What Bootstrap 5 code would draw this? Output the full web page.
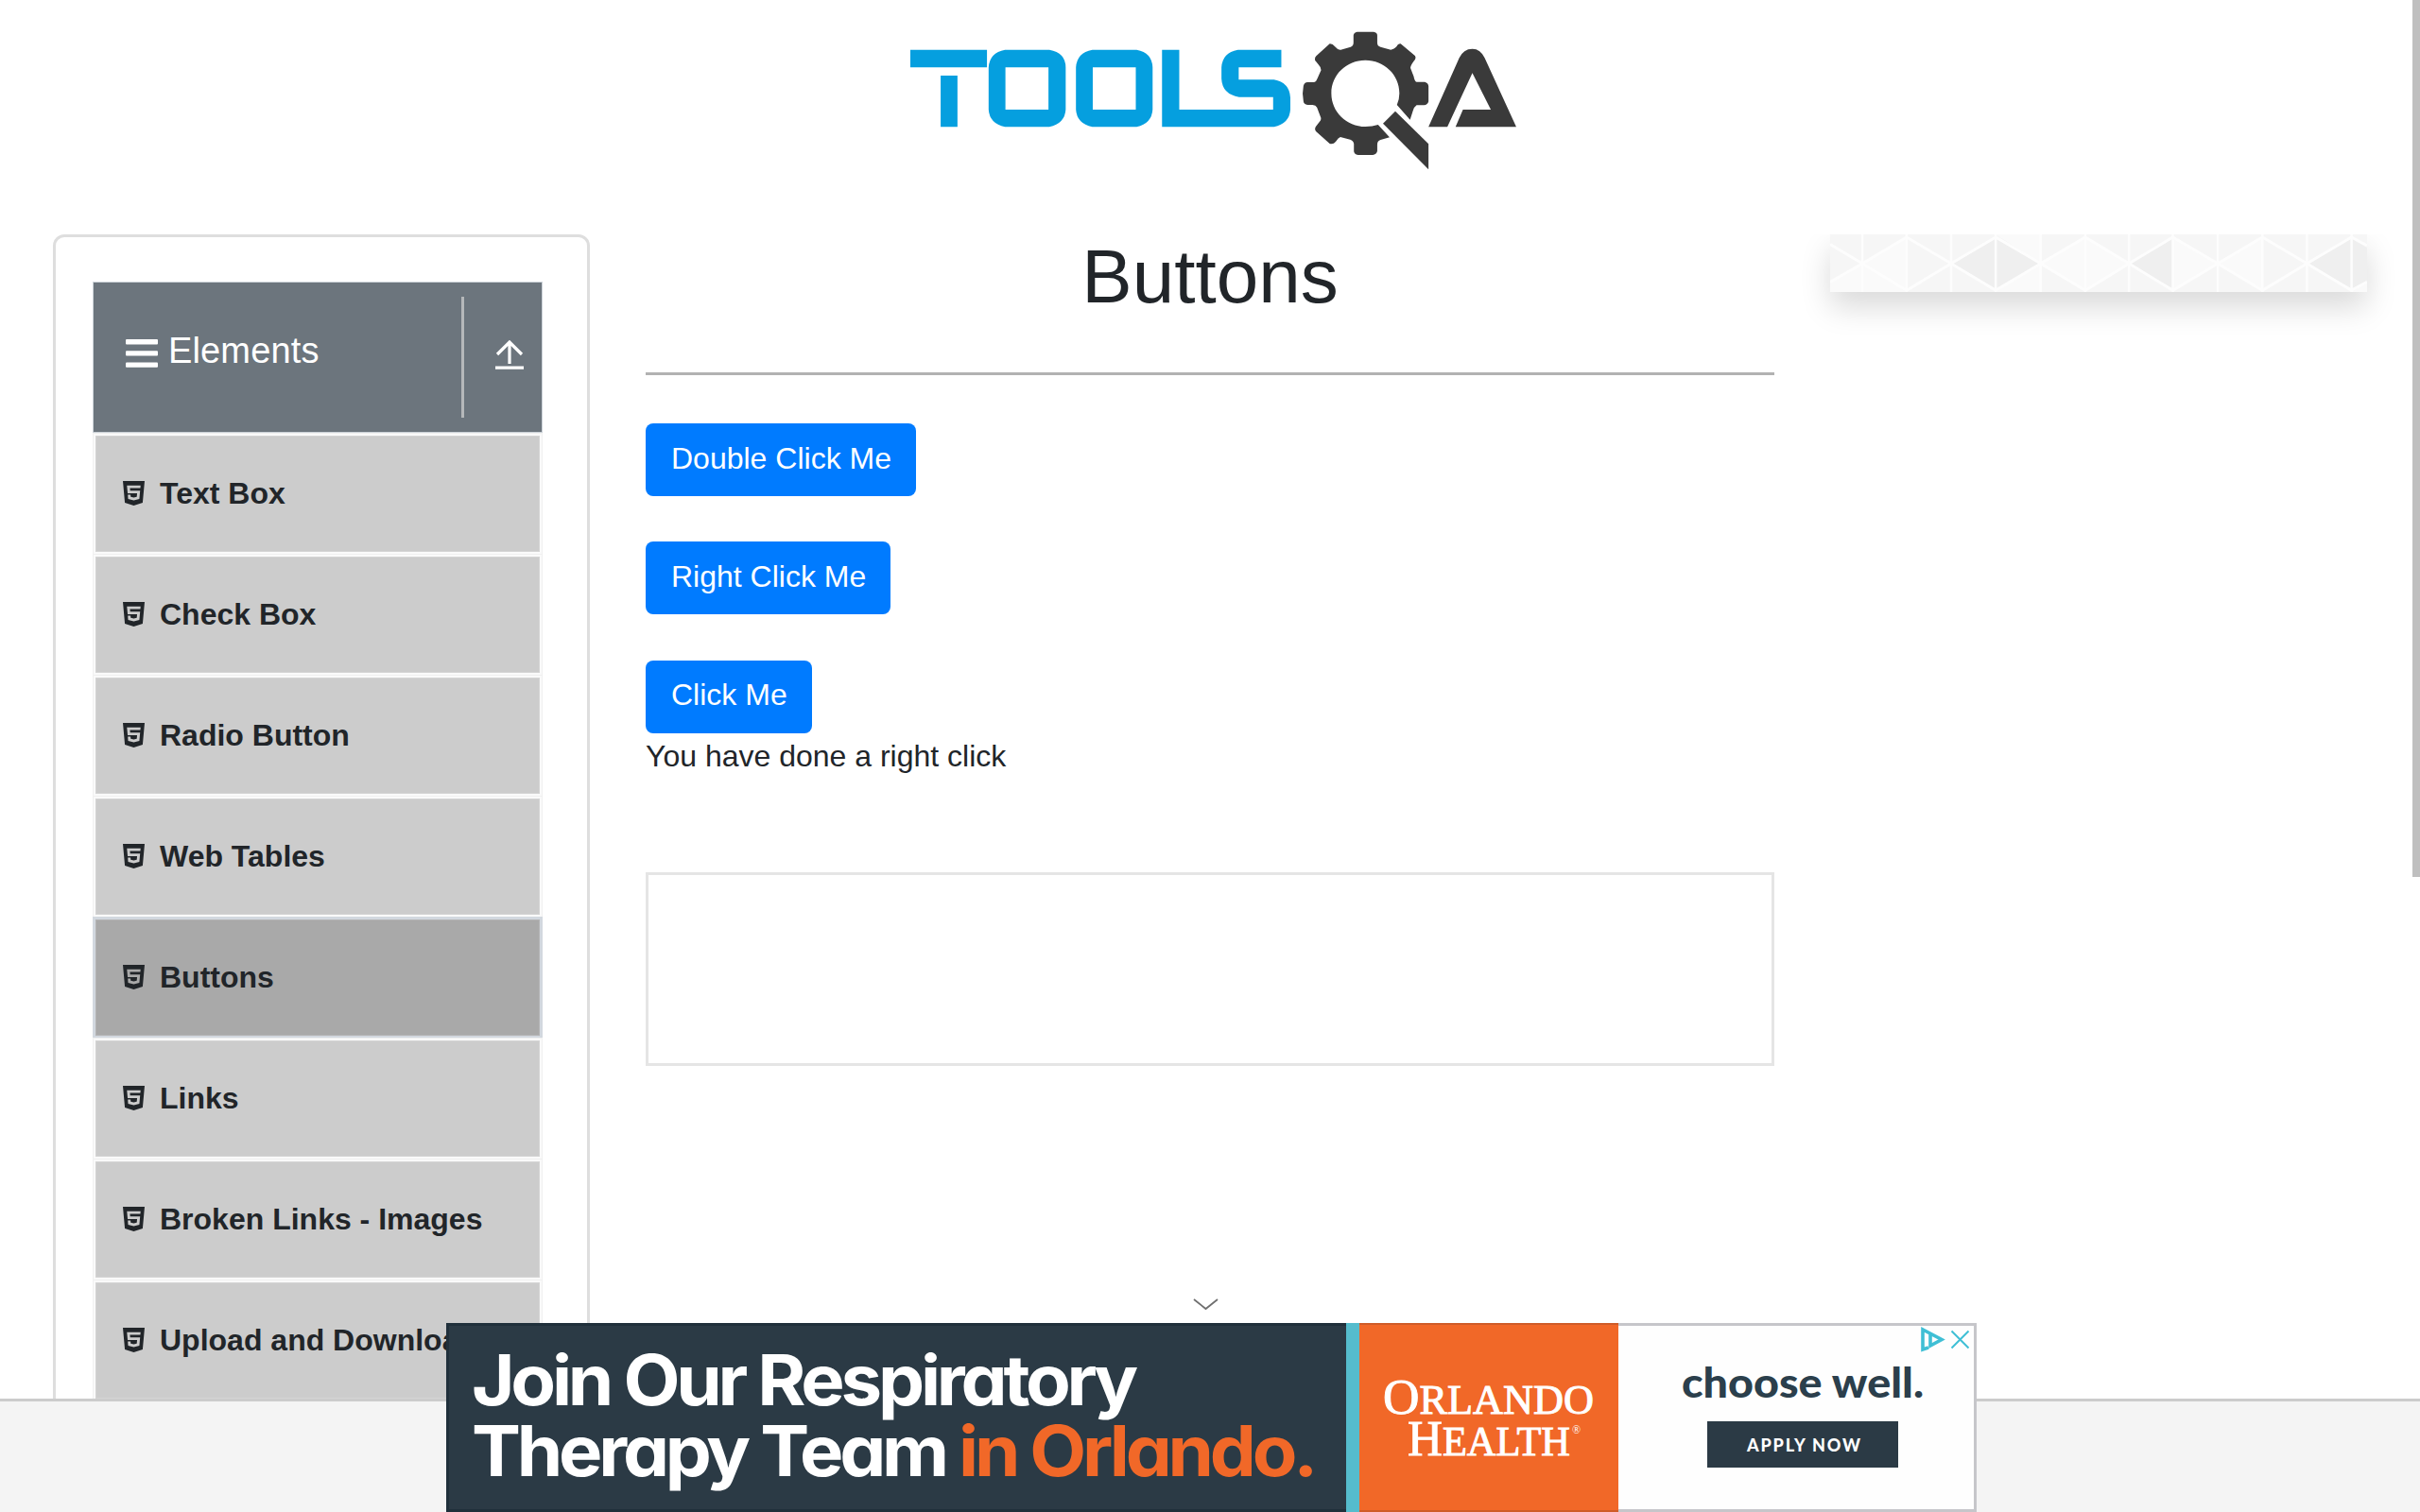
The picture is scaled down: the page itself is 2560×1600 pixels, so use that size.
<!DOCTYPE html>
<html lang="en">
<head>
<meta charset="utf-8">
<title>ToolsQA - Buttons</title>
<link rel="stylesheet" href="https://cdn.jsdelivr.net/npm/bootstrap@5.3.0/dist/css/bootstrap.min.css">
<style>
body{font:400 32px/48px "Liberation Sans",Arial,sans-serif;color:#212529;background:#fff;height:1600px;overflow:hidden}
.site-head{height:248px;padding:10px 0 0 940px}
.site-head svg{display:block;width:680px;height:190px}
.page-main{height:1232px;overflow:hidden;padding-left:56px}
.side-panel{width:568px;height:1400px;border:3px solid #dedede;border-radius:12px;padding:47px 47px 0 39px}
.group-head{height:160px;background:#6c757d;color:#fff;outline:1px solid #ccd2d8;outline-offset:-1px;padding-left:35px;font-size:38px}
.group-lead{height:150px}
.group-head .burger{width:34px;height:30px;margin-top:1px}
.group-title{margin-left:11px;padding-bottom:4px;letter-spacing:.15px}
.head-split{width:3px;height:128px;background:#b5b8ba;margin:16px 33px 0 auto}
.group-head .up{width:30px;height:31px;margin:62px 20px 0 0}
.side-item{height:128px;border:1px solid #f0f0f0;border-bottom:0;padding:2px;font-weight:700;background:#fafafa;border-radius:0}
.side-item>span{display:flex;align-items:center;height:123px;background:#ccc;border:1px solid #d4d4d4;padding:0 0 2px 28px;white-space:nowrap;overflow:hidden}
.side-item svg{width:23px;height:26px;margin-right:16px;flex:none}
.side-item.current{background:#d2d8df;border-color:#d2d8df}
.side-item.current>span{background:#a9a9a9;border-color:#b4b4b4}
.center-col{width:1194px;margin-left:59px}
.center-col h1{font-size:80px;line-height:90px;margin:0;text-align:center}
.rule{height:3px;background:#b2b2b2;margin-top:56px;margin-bottom:51px}
.btn-demo{display:block;height:77px;padding:0 26px 4px 27px;border:0;border-radius:8px;background:#007bff;color:#fff;font-size:32px;line-height:70px;margin-bottom:48.4px}
.btn-demo:hover{background:#0069d9;color:#fff}
.ad-frame{height:205px;border:3px solid #e5e5e5;margin-top:99px}
.side-promo{width:568px;height:61px;margin-left:59px;box-shadow:0 16px 32px rgba(0,0,0,.15)}
.side-promo svg{display:block;width:568px;height:61px}
.site-foot{height:120px;background:#f4f4f4;border-top:3px solid #ccc}
.sticky-ad{left:472px;top:1400px;width:1619px;height:200px}
.sticky-ad svg{display:block}
.ad-headline{font-family:Inter,Lato,sans-serif;font-weight:700;font-size:74px;letter-spacing:-4px;font-feature-settings:"cv11" 1,"ss03" 1;fill:#fff}
.ad-chevron{left:1262px;top:1373px;width:27px;height:14px}
.scroll-thumb{right:0;top:0;width:8px;height:928px;background:#bfbfbf}
</style>
</head>
<body class="position-relative">
<svg width="0" height="0" class="position-absolute">
  <symbol id="h5" viewBox="0 32 384 448" preserveAspectRatio="none"><path fill="#212529" d="M0 32l34.9 395.8L191.5 480l157.6-52.2L384 32H0zm308.2 127.900H124.4l4.100 49.400h175.600l-13.600 148.400-97.900 27v.3h-1.100l-98.700-27.300-6-75.800h47.700L138 320l53.500 14.500 53.700-14.500 6-62.200H84.300L71.500 112.200h241.100l-4.400 47.700z"/></symbol>
</svg>

<header class="site-head">
  <svg viewBox="0 0 1568 570" preserveAspectRatio="none" aria-label="TOOLSQA">
    <g fill="#059fdf">
      <path d="M53 128H240V184H53zM127 210H168V373H127z"/>
      <path fill-rule="evenodd" d="M284 128H392Q432 137 432 184V318Q430 362 392 373H284Q246 362 244 318V184Q246 137 284 128zM285 184V318H390V184z"/>
      <path fill-rule="evenodd" d="M497 128H605Q643 137 644 184V318Q642 362 605 373H497Q459 362 457 318V184Q459 137 497 128zM498 184V318H603V184z"/>
      <path d="M667 128H709V318H938V278H855Q814 270 812 220V184Q814 137 852 128H958V184H854V223H940Q978 232 980 280V318Q978 362 940 373H667z"/>
    </g>
    <g fill="#3a3a3a">
      <path fill-rule="evenodd" d="M1143 71H1183Q1192 73 1192 82V105Q1192 117 1200 119L1225 128Q1231 128 1239 118Q1243 107 1249 109L1284 147Q1288 155 1281 164Q1272 180 1273 186L1281 213Q1283 229 1288 230H1308Q1316 233 1317 243V292Q1315 303 1306 304H1288Q1282 309 1279 322L1272 350L1240 303Q1246 285 1246 266C1246 207 1209 161 1163 161C1117 161 1080 207 1080 266C1080 325 1117 372 1163 372Q1180 372 1194 366L1222 406L1200 414Q1192 417 1192 430V450Q1190 460 1181 462H1145Q1136 460 1135 451V427Q1134 416 1126 413L1102 405Q1097 407 1091 419Q1085 429 1076 426L1043 388Q1038 381 1042 372L1054 352Q1056 344 1052 335L1045 311Q1042 304 1034 303H1022Q1013 302 1012 292Q1008 267 1012 242Q1014 232 1022 231H1038Q1044 228 1046 219L1055 193Q1055 183 1048 174L1040 161Q1038 154 1043 148L1076 109Q1082 108 1090 119Q1097 130 1103 128L1127 119Q1134 116 1134 105V82Q1135 73 1143 71z"/>
      <path d="M1236 323L1317 427V508L1206 362z"/>
      <path d="M1317 373L1392 154Q1402 125 1424 125Q1444 125 1454 154L1531 373H1383L1401 318H1469L1424 202L1363 373z"/>
    </g>
  </svg>
</header>

<main class="page-main d-flex align-items-start">
  <aside class="side-panel flex-shrink-0">
    <div class="group-head d-flex">
      <div class="group-lead d-flex align-items-center">
        <svg class="burger" viewBox="0 0 34 30" fill="#fff"><rect y="0" width="34" height="5.4" rx="1"/><rect y="12.2" width="34" height="5.4" rx="1"/><rect y="24.4" width="34" height="5.4" rx="1"/></svg>
        <span class="group-title">Elements</span>
      </div>
      <div class="head-split"></div>
      <svg class="up" viewBox="0 0 30 31" fill="none" stroke="#fff" stroke-width="3.2"><path d="M15 25V2.500M2 15L15 2L28 15M0 29.200H30"/></svg>
    </div>
    <nav class="d-flex flex-column">
      <div class="side-item"><span><svg><use href="#h5"/></svg>Text Box</span></div>
      <div class="side-item"><span><svg><use href="#h5"/></svg>Check Box</span></div>
      <div class="side-item"><span><svg><use href="#h5"/></svg>Radio Button</span></div>
      <div class="side-item"><span><svg><use href="#h5"/></svg>Web Tables</span></div>
      <div class="side-item current"><span><svg><use href="#h5"/></svg>Buttons</span></div>
      <div class="side-item"><span><svg><use href="#h5"/></svg>Links</span></div>
      <div class="side-item"><span><svg><use href="#h5"/></svg>Broken Links - Images</span></div>
      <div class="side-item"><span><svg><use href="#h5"/></svg>Upload and Download</span></div>
    </nav>
  </aside>

  <section class="center-col flex-shrink-0">
    <h1 class="fw-normal">Buttons</h1>
    <div class="rule"></div>
    <button class="btn btn-demo" type="button">Double Click Me</button>
    <button class="btn btn-demo" type="button">Right Click Me</button>
    <button class="btn btn-demo mb-0" type="button">Click Me</button>
    <p class="m-0">You have done a right click</p>
    <div class="ad-frame"></div>
  </section>

  <aside class="side-promo flex-shrink-0">
    <svg viewBox="86 83 1349 184" preserveAspectRatio="none">
      <rect x="86" y="83" width="1349" height="184" fill="#f6f6f6"/>
      <g fill="#fafafa"><path d="M167 176L278 92V260z"/><path d="M86 235L167 176L278 267H86z"/><path d="M502 83H615V176z"/><path d="M615 176V267H502z"/><path d="M615 176L727 92L837 176L727 262z"/><path d="M947 92V262L1060 176z"/><path d="M1060 176L1172 92V262z"/><path d="M1396 267H1435V240z"/></g>
      <g fill="#efefef"><path d="M392 176L502 97L612 176L502 256z"/><path d="M838 176L947 97V256z"/><path d="M1284 176L1396 97L1435 125V230L1396 256z"/></g>
      <g stroke="#fdfdfd" stroke-width="8" fill="none"><path d="M86 115L167 176L278 92L390 176L502 92L615 176L727 92L837 176L947 92L1060 176L1172 92L1284 176L1396 92L1435 119M86 235L167 176L278 262L390 176L502 262L615 176L727 262L837 176L947 262L1060 176L1172 262L1284 176L1396 262L1435 235"/><path stroke-width="6" d="M167 83V267M278 83V267M390 83V267M502 83V267M615 83V267M727 83V267M837 83V267M947 83V267M1060 83V267M1172 83V267M1284 83V267M1396 83V267"/></g>
    </svg>
  </aside>
</main>

<footer class="site-foot"></footer>

<svg class="ad-chevron position-absolute" viewBox="0 0 27 14" fill="none" stroke="#6f6f6f" stroke-width="1.8"><path d="M1 2L13.500 12L26 2"/></svg>
<div class="sticky-ad position-absolute">
  <svg width="1619" height="200" viewBox="472 1400 1619 200">
    <rect x="472" y="1400" width="952" height="200" fill="#2b3a45"/>
    <path d="M1424 1401.500H473.500V1598.500H1424" fill="none" stroke="#20303b" stroke-width="3"/>
    <rect x="1424" y="1400" width="14" height="200" fill="#55bccd"/>
    <rect x="1438" y="1400" width="274" height="200" fill="#f16828"/>
    <path d="M1438 1401H1712M1438 1599H1712" stroke="#cf5c29" stroke-width="2"/>
    <rect x="1712" y="1400" width="379" height="200" fill="#fefefe"/>
    <path d="M1712 1401.500H2089.500V1598.500H1712" fill="none" stroke="#c6c6ca" stroke-width="3"/>
    <g class="ad-headline">
      <text x="499" y="1486.500" textLength="701" lengthAdjust="spacingAndGlyphs">Join Our Respiratory</text>
      <text x="499" y="1562" textLength="501" lengthAdjust="spacingAndGlyphs">Therapy Team</text>
      <text x="1014" y="1562" textLength="376" lengthAdjust="spacingAndGlyphs" fill="#f16828">in Orlando.</text>
    </g>
    <g font-family="'Liberation Serif',serif" fill="#fff" stroke="#fff" stroke-width="1">
      <text x="1463" y="1496" font-size="53" textLength="223" lengthAdjust="spacingAndGlyphs">O<tspan font-size="44">RLANDO</tspan></text>
      <text x="1489" y="1540" font-size="53" textLength="172" lengthAdjust="spacingAndGlyphs">H<tspan font-size="44">EALTH</tspan></text>
      <text x="1663" y="1517" font-size="12" stroke="none">®</text>
    </g>
    <text x="1779" y="1479" font-family="Lato,sans-serif" font-weight="900" font-size="44" fill="#2b3f4c" textLength="256" lengthAdjust="spacingAndGlyphs">choose well.</text>
    <rect x="1806" y="1504" width="202" height="49" fill="#2b3a45"/>
    <text x="1848" y="1535.500" font-family="Lato,sans-serif" font-weight="900" font-size="18" fill="#fff" textLength="120" lengthAdjust="spacing">APPLY NOW</text>
    <g fill="none" stroke="#3fbfd5">
      <path stroke-width="3.6" d="M2040 1426L2034 1428V1407L2054 1417.500L2042 1424V1412"/>
      <path stroke-width="2" d="M2064.500 1408.500L2082.500 1426.500M2082.500 1408.500L2064.500 1426.500"/>
    </g>
  </svg>
</div>
<div class="scroll-thumb position-absolute"></div>
<script src="https://cdn.jsdelivr.net/npm/bootstrap@5.3.0/dist/js/bootstrap.bundle.min.js"></script>
</body>
</html>
